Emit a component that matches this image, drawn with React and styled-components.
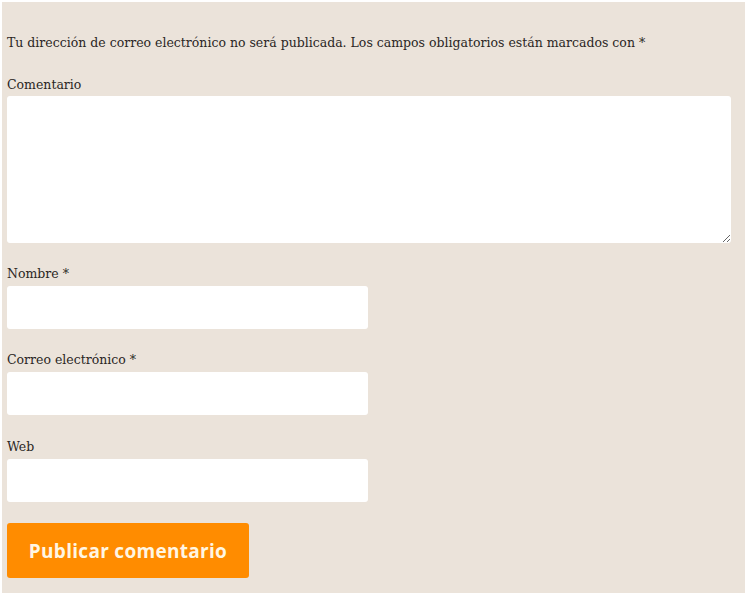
import React from "react";
import styled, { createGlobalStyle } from "styled-components";

const Global = createGlobalStyle`
  html, body { margin: 0; padding: 0; background: #ffffff; }
  * { box-sizing: border-box; }
`;

const Panel = styled.form`
  margin: 2px 5px 3px 2px;
  width: 743px;
  height: 591px;
  background: #ebe3da;
  padding: 31px 14px 0 5px;
  font-family: "DejaVu Serif", "Liberation Serif", serif;
  font-size: 12.5px;
  color: #2a2624;
  display: flex;
  flex-direction: column;
`;

const Note = styled.p`
  margin: 0 0 21px 0;
  line-height: 20px;
`;

const Field = styled.div`
  display: flex;
  flex-direction: column;
  margin-bottom: ${(p) => p.$after || 20}px;
`;

const Label = styled.label`
  line-height: 20px;
  padding-top: 1px;
  margin-bottom: ${(p) => p.$gap || 2}px;
`;

const TextArea = styled.textarea`
  width: 724px;
  height: 147px;
  border: none;
  border-radius: 3px;
  background: #fff;
  resize: vertical;
  display: block;
  outline: none;
`;

const Input = styled.input`
  width: 361px;
  height: 43px;
  border: none;
  border-radius: 3px;
  background: #fff;
  outline: none;
`;

const Button = styled.button`
  align-self: flex-start;
  width: 242px;
  height: 55px;
  margin-top: 1px;
  border: none;
  border-radius: 3px;
  background: #ff8c00;
  color: #fff6e3;
  font-family: "Open Sans", "Liberation Sans", sans-serif;
  font-weight: 700;
  font-size: 19px;
  letter-spacing: 0.3px;
  cursor: pointer;
`;

export default function App() {
  return (
    <>
      <Global />
      <Panel onSubmit={(e) => e.preventDefault()}>
        <Note>
          Tu dirección de correo electrónico no será publicada. Los campos obligatorios están marcados con *
        </Note>
        <Field>
          <Label $gap={1}>Comentario</Label>
          <TextArea />
        </Field>
        <Field>
          <Label>Nombre *</Label>
          <Input type="text" />
        </Field>
        <Field $after={21}>
          <Label>Correo electrónico *</Label>
          <Input type="email" />
        </Field>
        <Field>
          <Label>Web</Label>
          <Input type="url" />
        </Field>
        <Button type="submit">Publicar comentario</Button>
      </Panel>
    </>
  );
}
